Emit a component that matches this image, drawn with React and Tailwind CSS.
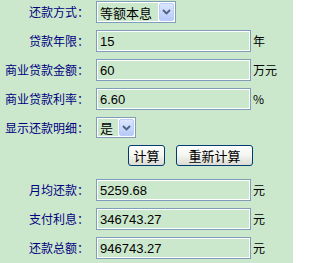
import React from "react";

const font = { fontFamily: '"Noto Sans CJK SC", "Liberation Sans", sans-serif' };

function Label({ children }) {
  return (
    <div className="w-[96px] shrink-0 pr-[7px] text-right text-[12px] leading-none text-[#000080]">
      {children}
    </div>
  );
}

function Field({ value, unit }) {
  return (
    <div className="flex items-center">
      <div className="h-[22px] w-[155px] border border-[#7f9db9] shadow-[inset_0_0_0_1px_#ffffff] flex items-center pl-[3px] text-[13px] leading-none text-black" style={{ fontFamily: '"Liberation Sans", "Noto Sans CJK SC", sans-serif' }}>
        {value}
      </div>
      {unit && <span className="ml-[2px] text-[12px] leading-none text-black">{unit}</span>}
    </div>
  );
}

function Chevron() {
  return (
    <svg width="9" height="6" viewBox="0 0 9 6">
      <path d="M1 1 L4.5 4.5 L8 1" fill="none" stroke="#4d6185" strokeWidth="1.8" />
    </svg>
  );
}

function Select({ value, w, h }) {
  return (
    <div className={`${w} ${h} flex border border-[#7f9db9] bg-white p-[1px]`}>
      <div className="flex-1 bg-[#cce8cc] flex items-center pl-[2px] text-[13px] leading-none text-black">
        {value}
      </div>
      <div className="ml-[1px] w-[15px] flex items-center justify-center rounded-[2px] border border-[#b9cdf8] bg-gradient-to-b from-[#dce6fd] to-[#b6c9f8]">
        <Chevron />
      </div>
    </div>
  );
}

function Btn({ children, w }) {
  return (
    <button className={`${w} h-[21px] rounded-[3px] border border-[#003c74] bg-gradient-to-b from-[#ffffff] via-[#f4f4f0] to-[#dcdcd4] text-[13px] leading-none text-black flex items-center justify-center`}>
      {children}
    </button>
  );
}

export default function App() {
  return (
    <div className="w-[293px] h-[263px] bg-[#cce8cc] overflow-hidden" style={font}>
      <div className="flex flex-col pt-[1px]">
        <div className="flex items-center h-[22px]">
          <Label>还款方式：</Label>
          <Select value="等额本息" w="w-[80px]" h="h-[22px]" />
        </div>
        <div className="flex items-center h-[22px] mt-[7px]">
          <Label>贷款年限：</Label>
          <Field value="15" unit="年" />
        </div>
        <div className="flex items-center h-[22px] mt-[7px]">
          <Label>商业贷款金额：</Label>
          <Field value="60" unit="万元" />
        </div>
        <div className="flex items-center h-[22px] mt-[7px]">
          <Label>商业贷款利率：</Label>
          <Field value="6.60" unit="%" />
        </div>
        <div className="flex items-center h-[21px] mt-[7px]">
          <Label>显示还款明细：</Label>
          <Select value="是" w="w-[40px]" h="h-[21px]" />
        </div>
        <div className="flex items-center h-[21px] mt-[7px] pl-[128px] gap-[11px]">
          <Btn w="w-[37px]">计算</Btn>
          <Btn w="w-[77px]">重新计算</Btn>
        </div>
        <div className="flex items-center h-[22px] mt-[13px]">
          <Label>月均还款：</Label>
          <Field value="5259.68" unit="元" />
        </div>
        <div className="flex items-center h-[22px] mt-[7px]">
          <Label>支付利息：</Label>
          <Field value="346743.27" unit="元" />
        </div>
        <div className="flex items-center h-[22px] mt-[7px]">
          <Label>还款总额：</Label>
          <Field value="946743.27" unit="元" />
        </div>
      </div>
    </div>
  );
}
